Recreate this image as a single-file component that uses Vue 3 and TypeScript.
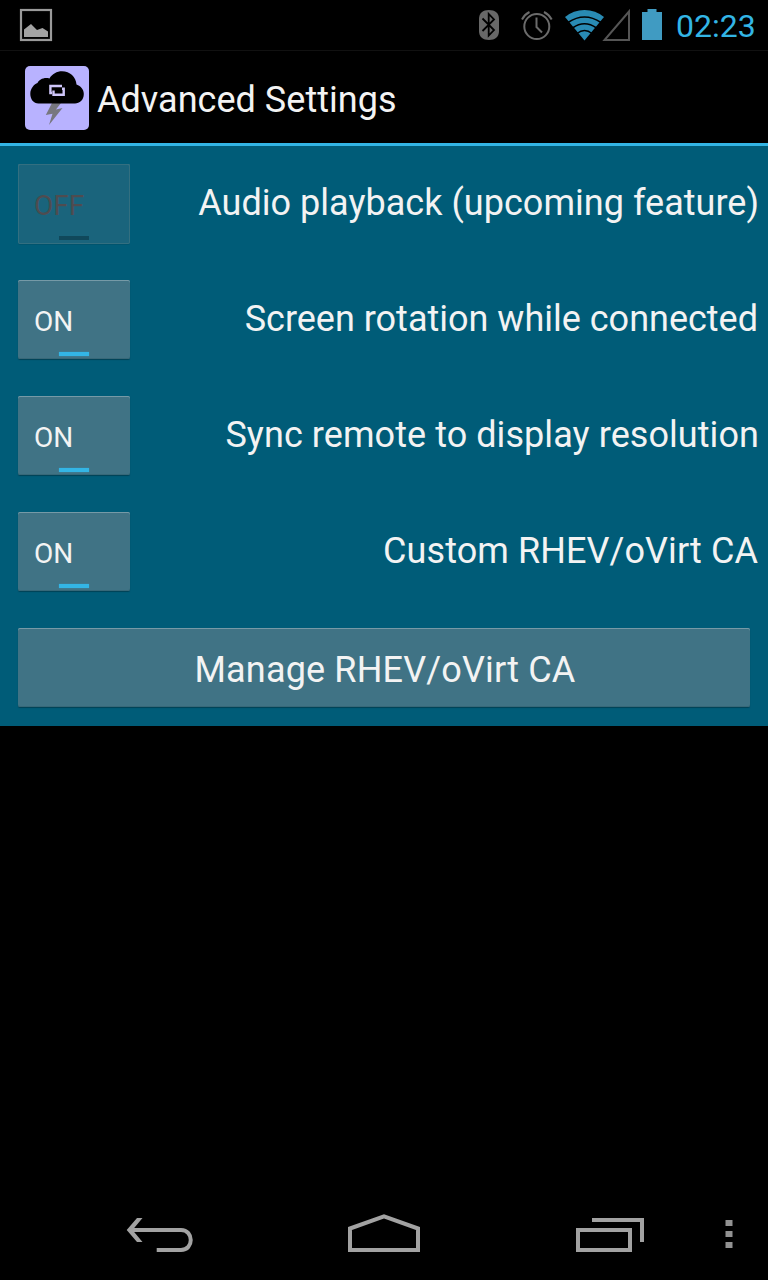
<script setup lang="ts">
import { ref } from 'vue'

interface Setting {
  key: string
  label: string
  on: boolean
  disabled?: boolean
}

const settings = ref<Setting[]>([
  { key: 'audio', label: 'Audio playback (upcoming feature)', on: false, disabled: true },
  { key: 'rotation', label: 'Screen rotation while connected', on: true },
  { key: 'sync', label: 'Sync remote to display resolution', on: true },
  { key: 'custom', label: 'Custom RHEV/oVirt CA', on: true },
])

function toggle(s: Setting) {
  if (!s.disabled) s.on = !s.on
}
</script>

<template>
  <div class="screen">
    <div class="status">
      <svg class="status-icons" width="660" height="50" viewBox="0 0 660 50">
        <rect x="21" y="10" width="30" height="30" fill="none" stroke="#9a9a9a" stroke-width="2.200" />
        <path d="M24 37V29.500L31 24L37 30L42.500 28L48 31.500V37Z" fill="#a3a3a3" />
        <path d="M488.800 10C495 10 499 13 499 19V31C499 37 495 40 489 40C483 40 479 37 479 31V19C479 13 483 10 488.800 10Z" fill="#686868" />
        <path d="M482.500 18.500L494 30L488.700 35.500V14L494 19.500L482.500 31" fill="none" stroke="#000" stroke-width="1.800" />
        <g fill="none" stroke="#6b6b6b" stroke-width="2">
          <circle cx="536.800" cy="26.500" r="12.500" />
          <path d="M536.500 17.500V27L542 32.500" />
          <path d="M522 19.500Q524.500 14.500 529.500 12M544 12Q549 14.500 551.700 19.500" />
        </g>
        <path d="M584.500 40.500L565 17Q573.500 10 584.500 10T604 17Z" fill="#298bb4" />
        <g fill="none" stroke="#000" stroke-width="1.600">
          <path d="M568 22.500Q584.500 11.500 601 22.500" />
          <path d="M572.500 28Q584.500 19.500 596.500 28" />
          <path d="M577 33.500Q584.500 27.500 592 33.500" />
        </g>
        <path d="M604.500 40H629V11.500Z" fill="none" stroke="#555" stroke-width="2" />
        <path d="M642 12H647.500V9H656.500V12H662V40H642Z" fill="#409bc2" />
      </svg>
      <span class="clock">02:23</span>
    </div>

    <header class="bar">
      <svg class="logo" width="64" height="64" viewBox="0 0 64 64">
        <rect width="64" height="64" rx="5" fill="#b8b2ff" />
        <path d="M27 37L20.800 49L27.500 47.800L24 59L37.500 42L31 43.500L36 37Z" fill="#77777f" />
        <path d="M13.500 37.500C8.500 37.500 5.300 33 5.300 28C5.300 22 9.500 18 12.500 17C14 13.500 19 11 24.500 12.500C27 8 32 5.300 37 5.300C45 5.300 51 11 51.500 18.500C56 20 58.800 23.500 58.800 28C58.800 34 54.500 37.500 50 37.500Z" fill="#000" />
        <path d="M37 20H25.400V27H27M37 22.800H38.700V28.800H28.500V24.500" fill="none" stroke="#cfc6fa" stroke-width="2.400" />
      </svg>
      <h1 class="title">Advanced Settings</h1>
    </header>

    <main class="panel">
      <div v-for="s in settings" :key="s.key" class="row">
        <button class="btn toggle" :class="{ off: s.disabled, checked: s.on }" :disabled="s.disabled" @click="toggle(s)">
          <span class="state">{{ s.on ? 'ON' : 'OFF' }}</span>
          <i class="indicator"></i>
        </button>
        <span class="label" :class="s.key">{{ s.label }}</span>
      </div>
      <button class="btn manage"><span>Manage RHEV/oVirt CA</span></button>
    </main>

    <nav class="nav">
      <svg width="768" height="90" viewBox="0 1190 768 90" fill="none" stroke="#a2a2a2" stroke-width="4">
        <path d="M129 1230H181C194 1230 194 1250 181 1250H156.700" />
        <path d="M142.500 1218H137L126.700 1230L137 1242H142.500L132.500 1230Z" fill="#a2a2a2" stroke="none" />
        <path d="M350 1250V1228.500L384 1216.300L418 1228.500V1250Z" />
        <path d="M578 1230H630V1250H578ZM592 1220H642V1242" />
        <path d="M725.500 1220H732.500V1226H725.500ZM725.500 1231H732.500V1237H725.500ZM725.500 1242H732.500V1248H725.500Z" fill="#929292" stroke="none" />
      </svg>
    </nav>
  </div>
</template>

<style>
body { margin: 0; background: #000; }
</style>

<style scoped>
.screen {
  width: 768px;
  height: 1280px;
  display: flex;
  flex-direction: column;
  background: #000;
  color: #f3f3f3;
  font-family: Roboto, "Liberation Sans", sans-serif;
  overflow: hidden;
}
.status {
  box-sizing: border-box;
  height: 51px;
  display: flex;
  border-bottom: 1px solid #111;
}
.status-icons { flex: none; overflow: visible; }
.clock {
  margin-left: 16px;
  font-size: 32px;
  line-height: 52px;
  color: #33b5e5;
}
.bar {
  box-sizing: border-box;
  height: 95px;
  display: flex;
  align-items: center;
  padding: 2px 0 0 25px;
  border-bottom: 3px solid #33b5e5;
}
.logo { flex: none; }
.title {
  margin: 0 0 0 8px;
  font-size: 36px;
  font-weight: 400;
  line-height: 42px;
  padding-top: 3px;
  letter-spacing: 0.03px;
  white-space: nowrap;
}
.panel {
  box-sizing: border-box;
  height: 580px;
  padding: 18px 10px 0 18px;
  background: #005c78;
}
.row {
  height: 116px;
  display: flex;
  align-items: flex-start;
  justify-content: space-between;
}
.label {
  font-size: 36px;
  line-height: 42px;
  padding-top: 18px;
  white-space: nowrap;
}
.audio {
  letter-spacing: 0.03px;
  margin-right: -1px;
}
.sync {
  letter-spacing: 0.07px;
  margin-right: -1px;
}
.custom { letter-spacing: 0.08px; }
.btn {
  box-sizing: border-box;
  display: block;
  height: 79px;
  margin: 0;
  padding: 0;
  border: 0;
  border-radius: 2px;
  background: #407385;
  box-shadow: inset 0 1px #769aa7, inset 0 -1px #386878, 0 1px 1px #004256;
  color: #f3f3f3;
  font-family: inherit;
}
.toggle {
  width: 112px;
  display: flex;
  flex-direction: column;
  align-items: center;
}
.state {
  align-self: flex-start;
  margin-left: 16px;
  height: 72px;
  font-size: 28px;
  line-height: 83px;
}
.indicator {
  width: 30px;
  height: 4px;
  background: #33b5e5;
  box-shadow: 0 0 1px #33b5e5;
}
.off {
  height: 80px;
  background: #1a647c;
  box-shadow: inset 0 0 0 1px #336f80, inset 0 1px #4a7f8e, 0 1px #00546e;
}
.off .state { color: #4e4c50; }
.off .indicator { background: #10485b; box-shadow: none; }
.manage {
  width: 732px;
  font-size: 36px;
  line-height: 83px;
  letter-spacing: 0.16px;
}
.manage span {
  display: block;
  padding: 1px 0 0 2px;
  height: 78px;
}
.nav { margin-top: auto; height: 90px; }
</style>
